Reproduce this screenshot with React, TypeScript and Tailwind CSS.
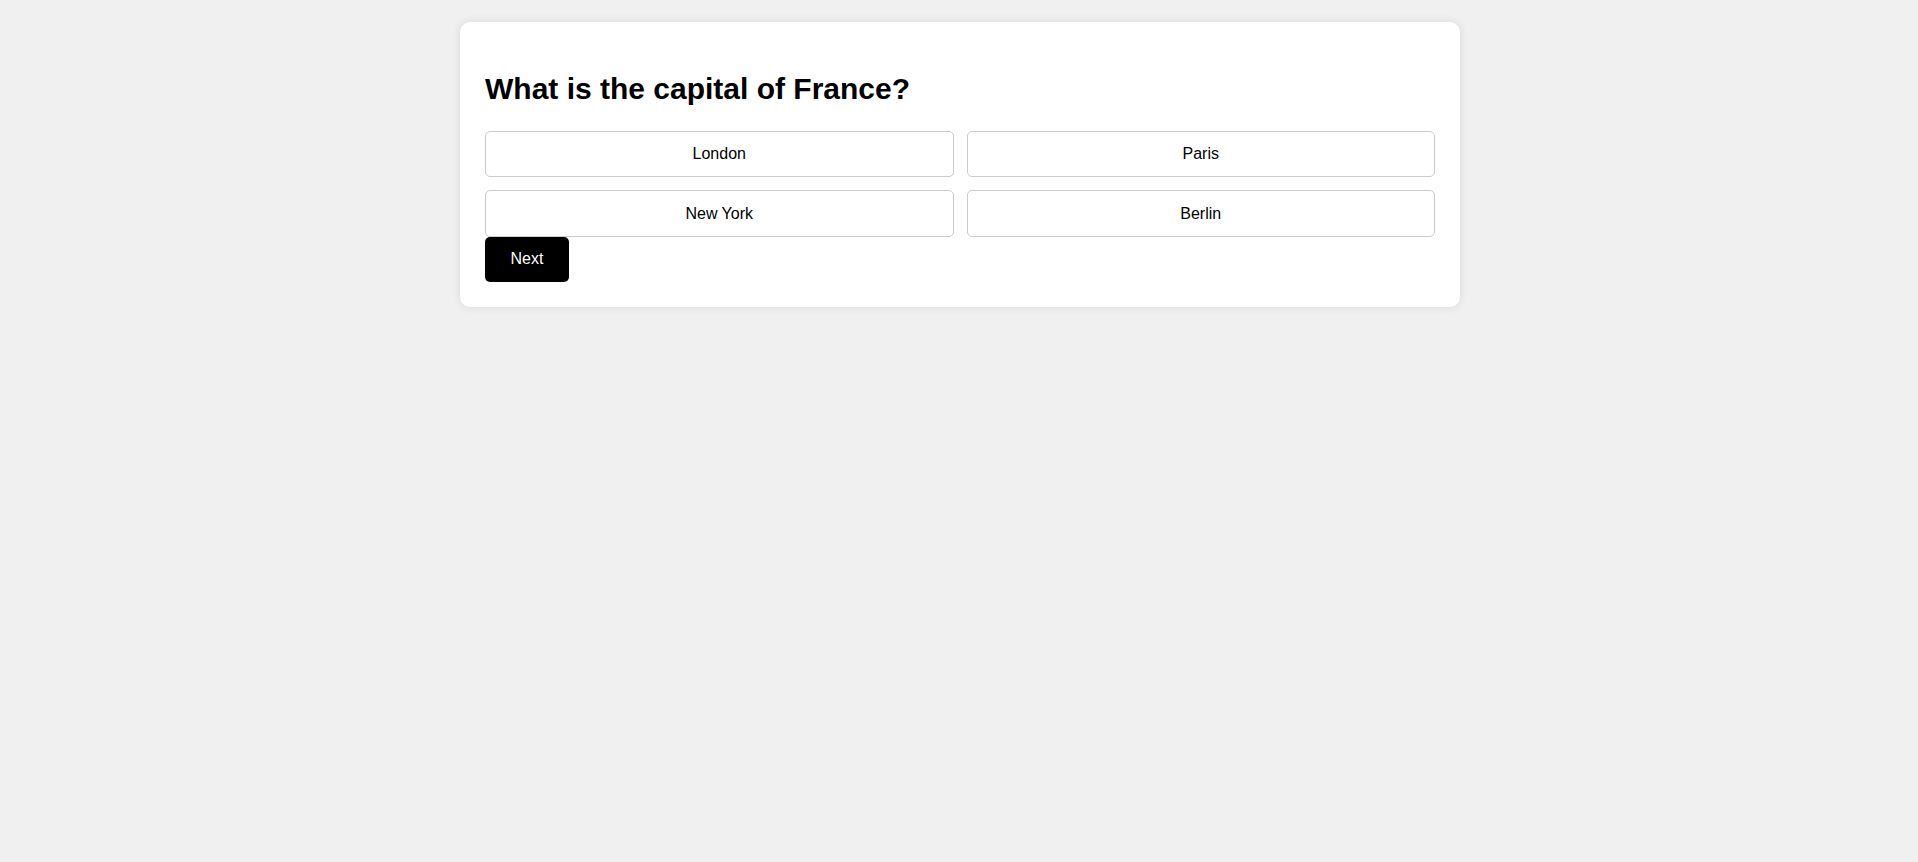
const options = ["London", "Paris", "New York", "Berlin"];

export default function App() {
  return (
    <div className="min-h-screen bg-[#f0f0f0] pl-[2px] pt-[22px] font-['Liberation_Sans',Arial,sans-serif] text-black">
      <div className="mx-auto w-[1000px] rounded-[10px] bg-white p-[25px] shadow-[0_0_10px_rgba(0,0,0,0.1)]">
        <h2 className="my-[25px] text-[30px] font-bold leading-[34px]">
          What is the capital of France?
        </h2>
        <div className="grid grid-cols-2 gap-[13px]">
          {options.map((opt) => (
            <button
              key={opt}
              type="button"
              className="flex h-[46.4px] items-center justify-center rounded-[5px] border border-[#cccccc] bg-white text-[16px] text-black"
            >
              {opt}
            </button>
          ))}
        </div>
        <button
          type="button"
          className="flex h-[45px] w-[84px] items-center justify-center rounded-[5px] bg-black text-[16px] text-white"
        >
          Next
        </button>
      </div>
    </div>
  );
}
